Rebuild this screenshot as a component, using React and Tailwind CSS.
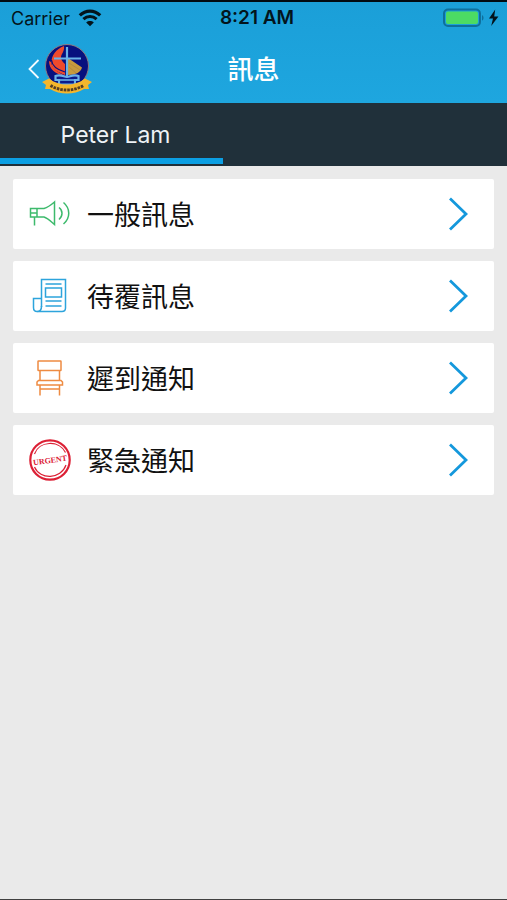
import React from 'react';

const WifiIcon = () => (
  <svg width="24" height="18" viewBox="0 0 24 18" fill="none" aria-hidden="true">
    <path d="M1.8 6.4C7.6 0.7 16.4 0.7 22.2 6.4" stroke="#03141c" strokeWidth="3.2" />
    <path d="M5.4 10.2C9.2 6.6 14.8 6.6 18.6 10.2" stroke="#03141c" strokeWidth="3" />
    <path d="M12 17.2L8.2 13.4C10.3 11.6 13.7 11.6 15.8 13.4Z" fill="#03141c" />
  </svg>
);

const BatteryIcon = () => (
  <svg width="56" height="20" viewBox="0 0 56 20" fill="none" aria-hidden="true">
    <rect x="1" y="1.5" width="36" height="16.5" rx="4" stroke="#0f6f9c" strokeWidth="2" />
    <rect x="3" y="3.5" width="32" height="12.5" rx="2" fill="#4cdb63" />
    <path d="M39 7.2C41 7.6 41 12 39 12.4Z" fill="#0f6f9c" />
    <path d="M52.2 1.5L46 10.6H50L48.2 18L55.4 8.4H51.2Z" fill="#03141c" />
  </svg>
);

const SchoolLogo = () => (
  <svg width="54" height="54" viewBox="0 0 54 52" fill="none" aria-hidden="true">
    <circle cx="27" cy="23" r="21.5" fill="#07107e" stroke="#8d7a80" strokeWidth="1" />
    <path
      d="M24 3C16 6 11 13 11.5 20C12 27 18 29 25 32V21C21 18 20 14 22 11C23.5 8 24.5 6 24 3Z"
      fill="#ee4a2c"
    />
    <path d="M9 18C9 26 15 31 25 33C18 29 12 26 11 19Z" fill="#ee4a2c" />
    <path d="M11.5 17C12 23 18 27 25 29" stroke="#07107e" strokeWidth="1.2" />
    <path d="M28 15L42 24.5C41 29 36 32 28 32Z" fill="#c79a3d" />
    <path d="M29 20L40 27M29 24L36 30" stroke="#a98442" strokeWidth="0.7" />
    <path d="M27 4V33M14 15.5H41" stroke="#69b1e8" strokeWidth="2.2" />
    <path
      d="M15.5 33C21 31 24 34 27 34C30 34 33 31 38.5 33V37H35V41.5H19V37H15.5Z"
      fill="#0b1a8a"
      stroke="#69b1e8"
      strokeWidth="2.2"
    />
    <path d="M19 37H35" stroke="#69b1e8" strokeWidth="1.6" />
    <path
      d="M2 39L9 35.5C19 43.5 35 43.5 45 35.5L52 39L48 42L49 46L44 46C34 52 20 52 10 46L5 46L6 42Z"
      fill="#f4b62c"
    />
    <path d="M10.5 42.5C20 48.5 34 48.5 43.5 42.5" stroke="#553e24" strokeWidth="2.8" strokeDasharray="2.6 0.9" />
  </svg>
);

const MegaphoneIcon = () => (
  <svg width="42" height="42" viewBox="0 0 42 42" fill="none" stroke="#3dba6c" strokeWidth="1.5" aria-hidden="true">
    <path d="M1.5 15.5H15C18.5 14.5 22 12 25.5 9V31.5C22 28.5 18.5 25 15 24H1.5Z" />
    <path d="M8 15.5V24M1.5 20H8M5.5 24V32.5" />
    <path d="M30 14.5C34 17.5 34 23 30 26.5" />
    <path d="M34.5 9.5C41.5 15.5 41.5 25 34.5 31" />
  </svg>
);

const NewspaperIcon = () => (
  <svg width="42" height="42" viewBox="0 0 42 42" fill="none" stroke="#2da4dc" strokeWidth="1.5" aria-hidden="true">
    <path d="M12.5 32V4.5H36.5V33C36.5 35.5 35.5 36.5 33 36.5H8C5.5 36.5 4.5 35 4.5 32.5V23.5H12.5" />
    <path d="M12.5 31C12.5 34.5 11.5 36.5 8.5 36.5" />
    <rect x="16.5" y="13" width="16" height="9" />
    <path d="M16.5 9H32.5M16.5 26H32.5M16.5 31H32.5" />
  </svg>
);

const ChairIcon = () => (
  <svg width="42" height="42" viewBox="0 0 42 42" fill="none" stroke="#ee8b42" strokeWidth="1.5" aria-hidden="true">
    <rect x="9" y="4" width="23" height="9.5" rx="0.5" />
    <path d="M11 13.5V23.5M30.5 13.5V23.5" />
    <path d="M9.5 23.5H32L33.5 25V28H8V25Z" />
    <path d="M11 28V38.5M30.5 28V38.5M11 32H30.5" />
  </svg>
);

const UrgentIcon = () => (
  <svg width="42" height="42" viewBox="0 0 42 42" fill="none" stroke="#dc2035" aria-hidden="true">
    <circle cx="21" cy="21" r="19.7" strokeWidth="2.2" />
    <path d="M5.5 15C10 2 30 0.5 36.5 13.5" strokeWidth="1.2" />
    <path d="M5.5 28C11 41 32 40.5 37 26" strokeWidth="1.2" />
    <text
      x="21"
      y="24"
      textAnchor="middle"
      transform="rotate(-8 21 21)"
      fill="#dc2035"
      stroke="none"
      className="font-['Liberation_Serif',serif] text-[8px] font-bold"
    >
      URGENT
    </text>
  </svg>
);

const messages = [
  { title: '一般訊息', icon: <MegaphoneIcon /> },
  { title: '待覆訊息', icon: <NewspaperIcon /> },
  { title: '遲到通知', icon: <ChairIcon /> },
  { title: '緊急通知', icon: <UrgentIcon /> },
];

const App = () => {
  return (
    <div className="flex min-h-screen flex-col border-t-2 border-b border-t-[#020b12] border-b-[#404040] bg-[#eaeaea] font-['Inter','Noto_Sans_CJK_TC',sans-serif]">
      <header className="bg-linear-to-b from-[#1b9fd8] to-[#1ea6df]">
        <div className="grid h-8 grid-cols-3 items-center pr-2 pl-[11px] text-[18px] text-[#03141c]">
          <div className="flex items-center gap-2">
            <span>Carrier</span>
            <WifiIcon />
          </div>
          <span className="pl-1 text-center text-[19px] font-semibold">8:21 AM</span>
          <div className="flex justify-end">
            <BatteryIcon />
          </div>
        </div>
        <div className="grid h-[69px] grid-cols-3 items-center px-4">
          <button type="button" aria-label="返回" className="flex items-center justify-self-start pl-3">
            <svg width="12" height="20" viewBox="0 0 12 20" fill="none" stroke="#f2fbff" strokeWidth="1.8" aria-hidden="true">
              <path d="M10.5 1L1.5 10L10.5 19" />
            </svg>
            <SchoolLogo />
          </button>
          <h1 className="pt-0.5 text-center text-[26px] font-medium text-white">訊息</h1>
        </div>
      </header>

      <nav className="flex h-[63px] bg-[#20303a] pb-[2px]">
        <button
          type="button"
          className="w-[44%] border-b-6 border-[#0c9fe3] pt-2.5 pl-2 text-[23px] text-[#eef3f6]"
        >
          Peter Lam
        </button>
      </nav>

      <main className="px-[13px] py-[13px]">
        <ul className="flex flex-col gap-3">
          {messages.map((item) => (
            <li key={item.title}>
              <button
                type="button"
                className="flex h-[70px] w-full items-center rounded-xs bg-white pr-[26px] pl-4 text-left"
              >
                {item.icon}
                <span className="ml-4 flex-1 pt-1 text-[27px] text-[#111111]">{item.title}</span>
                <svg width="20" height="34" viewBox="0 0 20 34" fill="none" stroke="#1498dc" strokeWidth="2.8" aria-hidden="true">
                  <path d="M2 1.5L18 17L2 32.5" />
                </svg>
              </button>
            </li>
          ))}
        </ul>
      </main>
    </div>
  );
};

export default App;
